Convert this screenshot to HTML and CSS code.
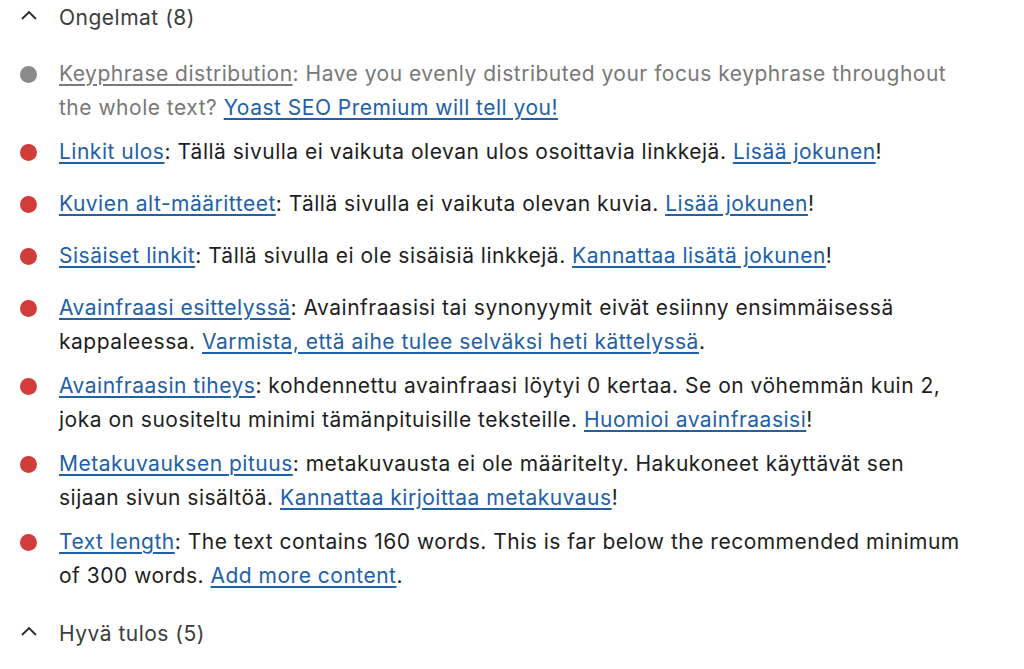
FILE: index.html
```html
<!DOCTYPE html>
<html lang="fi">
<head>
<meta charset="utf-8">
<title>SEO-analyysi</title>
<link rel="stylesheet" href="styles.css">
</head>
<body>
<section class="panel">
  <button class="section-toggle" type="button">
    <svg class="chevron" viewBox="0 0 18 12" width="18" height="12" aria-hidden="true"><path d="M2 10 L9 3 L16 10" fill="none" stroke="currentColor" stroke-width="1.8"/></svg>
    <span>Ongelmat (8)</span>
  </button>
  <ul class="results">
    <li class="result muted">
      <span class="dot dot-gray"></span>
      <p class="text"><a class="link-muted" href="#">Keyphrase distribution</a>: Have you evenly distributed your focus keyphrase throughout the whole text? <a href="#">Yoast SEO Premium will tell you!</a></p>
    </li>
    <li class="result">
      <span class="dot"></span>
      <p class="text"><a href="#">Linkit ulos</a>: Tällä sivulla ei vaikuta olevan ulos osoittavia linkkejä. <a href="#">Lisää jokunen</a>!</p>
    </li>
    <li class="result">
      <span class="dot"></span>
      <p class="text"><a href="#">Kuvien alt-määritteet</a>: Tällä sivulla ei vaikuta olevan kuvia. <a href="#">Lisää jokunen</a>!</p>
    </li>
    <li class="result">
      <span class="dot"></span>
      <p class="text"><a href="#">Sisäiset linkit</a>: Tällä sivulla ei ole sisäisiä linkkejä. <a href="#">Kannattaa lisätä jokunen</a>!</p>
    </li>
    <li class="result">
      <span class="dot"></span>
      <p class="text"><a href="#">Avainfraasi esittelyssä</a>: Avainfraasisi tai synonyymit eivät esiinny ensimmäisessä kappaleessa. <a href="#">Varmista, että aihe tulee selväksi heti kättelyssä</a>.</p>
    </li>
    <li class="result">
      <span class="dot"></span>
      <p class="text"><a href="#">Avainfraasin tiheys</a>: kohdennettu avainfraasi löytyi 0 kertaa. Se on vöhemmän kuin 2, joka on suositeltu minimi tämänpituisille teksteille. <a href="#">Huomioi avainfraasisi</a>!</p>
    </li>
    <li class="result">
      <span class="dot"></span>
      <p class="text"><a href="#">Metakuvauksen pituus</a>: metakuvausta ei ole määritelty. Hakukoneet käyttävät sen sijaan sivun sisältöä. <a href="#">Kannattaa kirjoittaa metakuvaus</a>!</p>
    </li>
    <li class="result">
      <span class="dot"></span>
      <p class="text"><a href="#">Text length</a>: The text contains 160 words. This is far below the recommended minimum of 300 words. <a href="#">Add more content</a>.</p>
    </li>
  </ul>
  <button class="section-toggle" type="button">
    <svg class="chevron" viewBox="0 0 18 12" width="18" height="12" aria-hidden="true"><path d="M2 10 L9 3 L16 10" fill="none" stroke="currentColor" stroke-width="1.8"/></svg>
    <span>Hyvä tulos (5)</span>
  </button>
</section>
</body>
</html>
```
FILE: styles.css
```css
html, body {
  margin: 0;
  padding: 0;
  background: #ffffff;
}
body {
  font-family: Inter, "Liberation Sans", sans-serif;
  font-size: 21px;
  letter-spacing: 0.5px;
  color: #1e1e1e;
}
.panel {
  width: 945px;
  padding: 0 0 0 20px;
}
.section-toggle {
  display: flex;
  align-items: center;
  gap: 21px;
  height: 34px;
  padding: 0;
  border: 0;
  background: none;
  font: inherit;
  letter-spacing: inherit;
  color: #3c3c3c;
  cursor: pointer;
}
.section-toggle + .results { margin-top: 23px; }
.results + .section-toggle { margin-top: 24px; }
.chevron {
  display: block;
  color: #2a2a2a;
  margin-top: -4px;
}
.results {
  list-style: none;
  margin: 0;
  padding: 0;
  display: flex;
  flex-direction: column;
  gap: 11px;
}
.result {
  display: flex;
  align-items: flex-start;
  gap: 22px;
  min-height: 41px;
}
.dot {
  flex: none;
  width: 17px;
  height: 17px;
  border-radius: 50%;
  background: #d13d3a;
  margin-top: 8.5px;
}
.dot-gray { background: #8a8a8a; }
.text {
  margin: 0;
  line-height: 33.5px;
  flex: 1;
}
.text a {
  color: #2160a8;
  text-decoration: underline;
  text-decoration-thickness: 1.5px;
  text-underline-offset: 3px;
}
.muted .text { color: #787878; }
.text a.link-muted { color: #787878; }
```
